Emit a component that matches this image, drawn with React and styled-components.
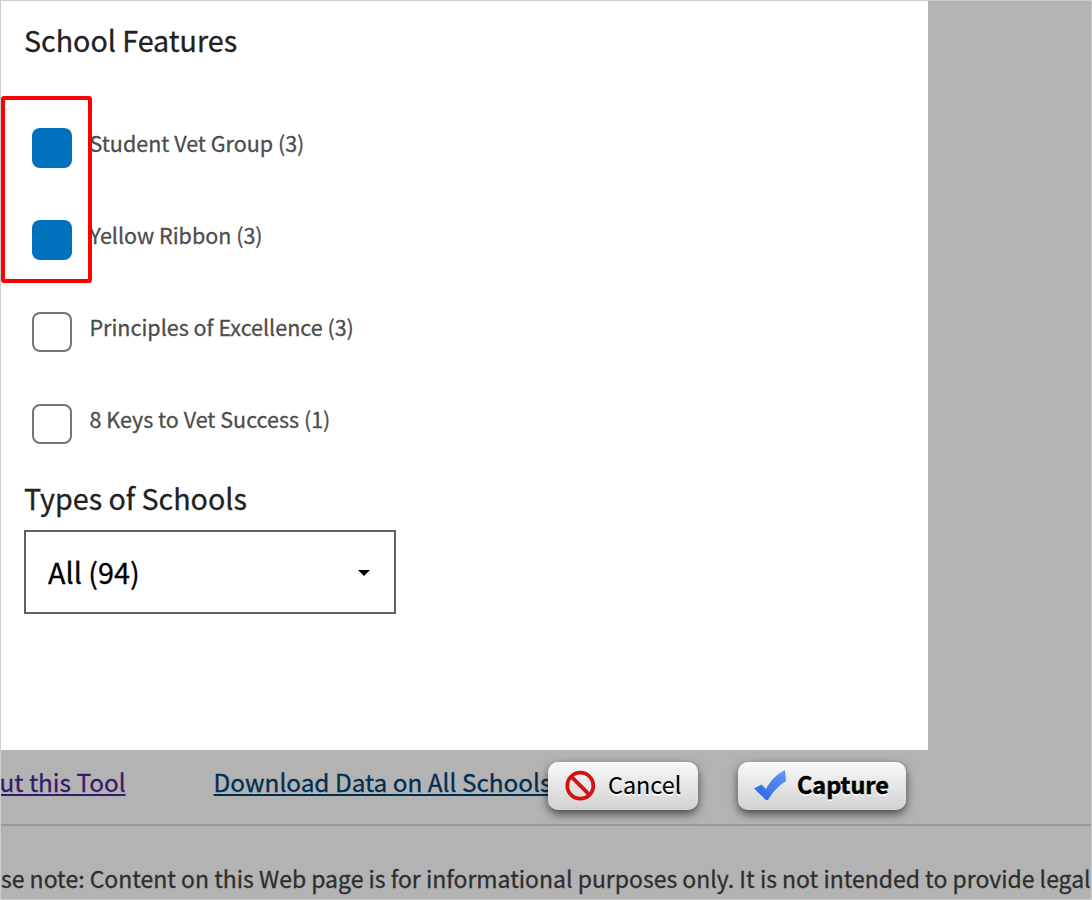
import React from "react";
import styled, { createGlobalStyle } from "styled-components";

const GlobalStyle = createGlobalStyle`
  * { box-sizing: border-box; }
  body {
    margin: 0;
    font-family: "Noto Sans CJK SC", "Noto Sans", sans-serif;
    overflow: hidden;
  }
`;

const Frame = styled.div`
  position: relative;
  width: 1092px;
  height: 900px;
  border: 1px solid #ccc;
  background: #b3b3b3;
  overflow: hidden;
`;

const Panel = styled.main`
  position: relative;
  display: flex;
  flex-direction: column;
  width: 927px;
  height: 749px;
  padding: 19px 23px 0;
  background: #fff;
`;

const Heading = styled.h2`
  margin: 0;
  font-size: 28.65px;
  font-weight: 400;
  line-height: 40px;
  color: #212121;
  -webkit-text-stroke: 0.3px;
  white-space: nowrap;
`;

const Options = styled.div`
  display: flex;
  flex-direction: column;
  gap: 52px;
  padding: 68px 0 34px 8px;
`;

const Option = styled.label`
  display: flex;
  height: 40px;
  gap: 17.5px;
`;

const Box = styled.span`
  width: 40px;
  height: 40px;
  border: ${(p) => (p.$checked ? "0" : "2px solid #757575")};
  border-radius: 8px;
  background: ${(p) => (p.$checked ? "#0071bc" : "#fff")};
`;

const OptionText = styled.span`
  font-size: 21.5px;
  line-height: 29px;
  color: #4d4d4d;
  -webkit-text-stroke: 0.3px;
  white-space: nowrap;
`;

const Select = styled.div`
  display: flex;
  align-items: center;
  justify-content: space-between;
  width: 372px;
  height: 84px;
  margin-top: 12px;
  padding: 0 24px 0 22px;
  border: 2px solid #5b616b;
  font-size: 28.8px;
  line-height: 80px;
  color: #000;
  -webkit-text-stroke: 0.3px;
`;

const Caret = styled.svg`
  margin-top: 2px;
`;

const Highlight = styled.div`
  position: absolute;
  left: 0;
  top: 95px;
  width: 91px;
  height: 187px;
  border: 4px solid #f00;
  border-radius: 3px;
`;

const LinkBar = styled.nav`
  display: flex;
  gap: 88px;
  height: 76px;
  padding-top: 12px;
  border-bottom: 2px solid #999;
`;

const FooterLink = styled.span`
  height: 36px;
  margin-left: ${(p) => (p.$visited ? "-1.5px" : "0")};
  font-size: 24.35px;
  line-height: 40px;
  color: ${(p) => (p.$visited ? "#351c69" : "#002e51")};
  text-decoration: underline;
  text-decoration-thickness: 2px;
  text-underline-offset: 2px;
  text-decoration-skip-ink: none;
  -webkit-text-stroke: 0.3px;
  white-space: nowrap;
`;

const Note = styled.p`
  margin: 0;
  padding-top: 32px;
  font-size: 22.98px;
  line-height: 40px;
  color: #2e2e2e;
  -webkit-text-stroke: 0.3px;
  white-space: nowrap;
`;

const Actions = styled.div`
  position: absolute;
  left: 547px;
  top: 761px;
  display: flex;
  gap: 40px;
`;

const Action = styled.button`
  display: flex;
  align-items: center;
  width: ${(p) => p.$width}px;
  height: 48px;
  padding: 0 0 0 16px;
  gap: ${(p) => p.$gap}px;
  border: 0;
  border-radius: 10px;
  background: linear-gradient(#f9f9f9, #d2d2d2);
  box-shadow: 0 4px 10px rgba(0, 0, 0, 0.6);
  font-family: inherit;
  font-size: 23.4px;
  font-weight: ${(p) => (p.$strong ? 700 : 400)};
  line-height: 44px;
  color: #000;
  text-shadow: 0 2px 0 #fff;
  -webkit-text-stroke: ${(p) => (p.$strong ? 0.5 : 0.1)}px;
  white-space: nowrap;
`;

const ActionText = styled.span`
  height: 48px;
`;

const options = [
  ["Student Vet Group (3)", true],
  ["Yellow Ribbon (3)", true],
  ["Principles of Excellence (3)", false],
  ["8 Keys to Vet Success (1)", false],
];

export default function App() {
  return (
    <>
      <GlobalStyle />
      <Frame>
        <Panel>
          <Heading>School Features</Heading>
          <Options>
            {options.map(([text, checked]) => (
              <Option key={text}>
                <Box $checked={checked} />
                <OptionText>{text}</OptionText>
              </Option>
            ))}
          </Options>
          <Heading>Types of Schools</Heading>
          <Select>
            <span>All (94)</span>
            <Caret width="12" height="6" viewBox="0 0 12 6">
              <path d="M0 0H12L6 6Z" fill="#000" />
            </Caret>
          </Select>
          <Highlight />
        </Panel>
        <LinkBar>
          <FooterLink $visited>ut this Tool</FooterLink>
          <FooterLink>Download Data on All Schools</FooterLink>
        </LinkBar>
        <Note>
          se note: Content on this Web page is for informational purposes only. It is not intended to provide legal
        </Note>
        <Actions>
          <Action $width={150} $gap={12}>
            <svg width="32" height="32" viewBox="0 0 32 32" fill="none" stroke="#d31212" strokeWidth="3.8">
              <circle cx="16.3" cy="15.7" r="13" />
              <path d="M7.3 6.7L25.3 24.7" />
            </svg>
            <ActionText>Cancel</ActionText>
          </Action>
          <Action $width={168} $gap={11} $strong>
            <svg width="32" height="32" viewBox="0 0 32 32">
              <defs>
                <linearGradient id="tick" x1="0" y1="1" x2="0.6" y2="0">
                  <stop offset="0" stopColor="#2865dc" />
                  <stop offset="1" stopColor="#5c90f5" />
                </linearGradient>
              </defs>
              <path d="M0 18.5L7.5 14.5L12 19C17 10 22 5 31 0L32 11C24 16 19 22 14 30L12 30Z" fill="url(#tick)" />
            </svg>
            <ActionText>Capture</ActionText>
          </Action>
        </Actions>
      </Frame>
    </>
  );
}
